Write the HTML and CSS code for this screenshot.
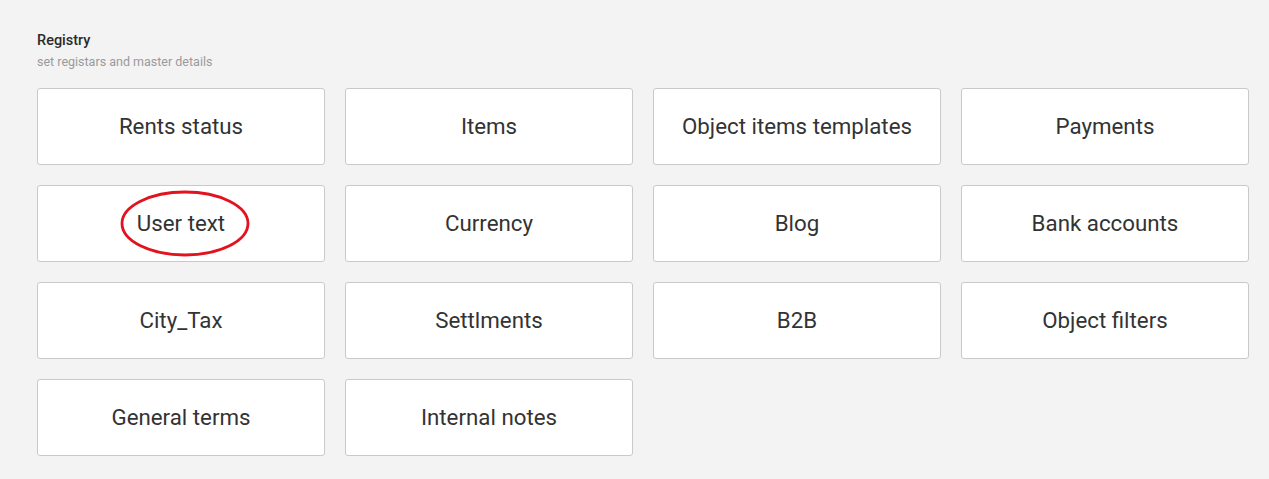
FILE: index.html
```html
<!DOCTYPE html>
<html lang="en">
<head>
<meta charset="utf-8">
<title>Registry</title>
<link rel="stylesheet" href="styles.css">
</head>
<body>
<main class="page">
  <header class="section-head">
    <h2 class="title">Registry</h2>
    <p class="subtitle">set registars and master details</p>
  </header>
  <div class="tiles">
    <a class="tile">Rents status</a>
    <a class="tile">Items</a>
    <a class="tile">Object items templates</a>
    <a class="tile">Payments</a>
    <a class="tile tile-marked">User text
      <svg class="mark" width="130" height="67" viewBox="0 0 130 67" aria-hidden="true">
        <ellipse cx="65" cy="33.5" rx="63" ry="31.5" fill="none" stroke="#e3121f" stroke-width="2.8"/>
      </svg>
    </a>
    <a class="tile">Currency</a>
    <a class="tile">Blog</a>
    <a class="tile">Bank accounts</a>
    <a class="tile">City_Tax</a>
    <a class="tile">Settlments</a>
    <a class="tile">B2B</a>
    <a class="tile">Object filters</a>
    <a class="tile">General terms</a>
    <a class="tile">Internal notes</a>
  </div>
</main>
</body>
</html>
```

FILE: styles.css
```css
html, body {
  margin: 0;
  padding: 0;
  background: #f3f3f3;
}

body {
  font-family: Roboto, "Noto Sans", "Liberation Sans", sans-serif;
  color: #333;
}

.page {
  padding: 31px 0 0 37px;
}

.section-head {
  margin: 0;
}

.title {
  margin: 0;
  font-size: 14.5px;
  line-height: 20px;
  font-weight: 500;
  color: #2b2b2b;
}

.subtitle {
  margin: 3px 0 0;
  font-size: 12.5px;
  line-height: 16px;
  color: #9a9a9a;
}

.tiles {
  margin-top: 18px;
  display: grid;
  grid-template-columns: repeat(4, 288px);
  grid-auto-rows: 77px;
  column-gap: 20px;
  row-gap: 20px;
}

.tile {
  position: relative;
  box-sizing: border-box;
  display: flex;
  align-items: center;
  justify-content: center;
  padding-bottom: 2px;
  background: #fff;
  border: 1px solid #c9c9c9;
  border-radius: 3px;
  font-size: 22.3px;
  color: #333;
  text-decoration: none;
}

.mark {
  position: absolute;
  left: 82px;
  top: 4px;
}
```
